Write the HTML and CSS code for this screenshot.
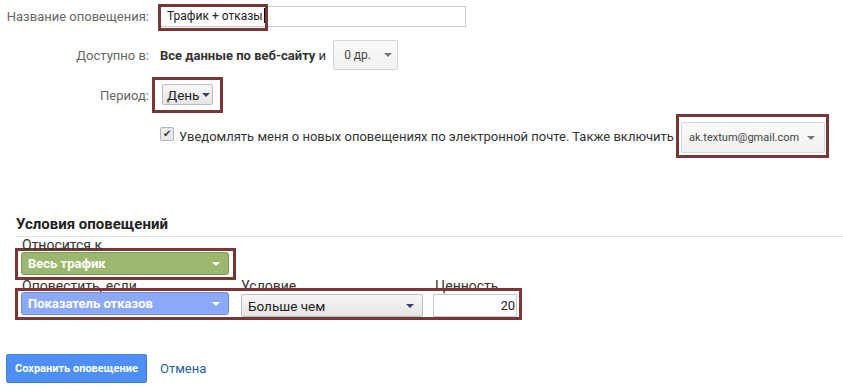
FILE: index.html
```html
<!DOCTYPE html>
<html lang="ru">
<head>
    <meta charset="UTF-8">
    <title>Оповещение</title>
    <link rel="stylesheet" href="styles.css">
</head>
<body>
    <div class="page">

        <!-- Общие настройки -->
        <div class="row row-name">
            <div class="label">Название оповещения:</div>
            <div class="field">
                <div class="text-input name-input">Трафик + отказы<span class="caret"></span></div>
                <div class="mark mark-name"></div>
            </div>
        </div>

        <div class="row row-avail">
            <div class="label">Доступно в:</div>
            <div class="field">
                <span><b>Все данные по веб-сайту</b> и</span>
                <button class="btn btn-small">0 др. <span class="arrow arrow-gray"></span></button>
            </div>
        </div>

        <div class="row row-period">
            <div class="label">Период:</div>
            <div class="mark mark-period">
                <button class="btn btn-day">День <span class="arrow arrow-navy"></span></button>
            </div>
        </div>

        <div class="row row-notify">
            <div class="label"></div>
            <div class="field notify">
                <span class="checkbox">&#10004;</span>
                <span class="notify-text">Уведомлять меня о новых оповещениях по электронной почте. Также включить</span>
                <div class="mark mark-email">
                    <button class="btn btn-email">ak.textum@gmail.com <span class="arrow arrow-gray"></span></button>
                </div>
            </div>
        </div>

        <!-- Условия -->
        <div class="conditions">
            <h3 class="section-title">Условия оповещений</h3>
            <div class="cond-label">Относится к</div>
            <div class="mark mark-scope">
                <div class="select select-green">Весь трафик <span class="arrow arrow-white"></span></div>
            </div>
            <div class="cond-labels">
                <span class="col-metric">Оповестить, если</span>
                <span class="col-cond">Условие</span>
                <span class="col-value">Ценность</span>
            </div>
            <div class="mark mark-rule">
                <div class="select select-blue">Показатель отказов <span class="arrow arrow-white"></span></div>
                <div class="select select-gray">Больше чем <span class="arrow arrow-navy"></span></div>
                <div class="text-input value-input">20</div>
            </div>
        </div>

        <div class="actions">
            <button class="btn-save">Сохранить оповещение</button>
            <a class="cancel" href="#">Отмена</a>
        </div>
    </div>
</body>
</html>
```

FILE: styles.css
```css
/* Общие стили */
body {
    margin: 0;
    background: #fff;
    font-family: Roboto, 'Liberation Sans', Arial, sans-serif;
    font-size: 13px;
    color: #333;
}

.page {
    width: 843px;
    height: 388px;
    overflow: hidden;
}

/* Рамки-выделения */
.mark {
    border: 3px solid #7a3636;
    box-sizing: border-box;
}

/* Строки формы */
.row {
    display: flex;
    align-items: center;
}

.label {
    width: 150px;
    flex: none;
    text-align: right;
    color: #666;
    font-size: 13px;
    padding-right: 1px;
    box-sizing: border-box;
}

.field {
    margin-left: 10px;
    position: relative;
    display: flex;
    align-items: center;
}

.row-name {
    height: 33px;
}

.row-avail {
    height: 36px;
    margin-top: 4px;
}

.row-period {
    height: 36px;
    margin-top: 4px;
}

.row-notify {
    height: 46px;
}

.text-input {
    border: 1px solid #c8c8c8;
    box-sizing: border-box;
    background: #fff;
    color: #222;
    font-size: 13px;
}

.name-input {
    width: 306px;
    height: 21px;
    line-height: 19px;
    padding-left: 6px;
    font-size: 12px;
}

.caret {
    display: inline-block;
    position: relative;
    z-index: 1;
    width: 1px;
    height: 15px;
    margin-left: 1px;
    background: #000;
    vertical-align: -3px;
}

.mark-name {
    position: absolute;
    left: -2px;
    top: -2px;
    width: 110px;
    height: 27px;
}

/* Кнопки */
.btn {
    font-family: inherit;
    border: 1px solid #d6d6d6;
    border-radius: 2px;
    background: linear-gradient(#fafafa, #f1f1f1);
    color: #444;
    padding: 0;
    display: flex;
    align-items: center;
    box-sizing: border-box;
}

.btn-small {
    width: 65px;
    height: 30px;
    margin-left: 7px;
    font-size: 12px;
    padding-left: 10px;
    gap: 13px;
}

.mark-period {
    margin-left: 2px;
    padding: 4px 7px 5px 7px;
}

.btn-day {
    width: 51px;
    height: 21px;
    font-size: 13.5px;
    color: #222;
    padding-left: 4px;
    gap: 3px;
    border-color: #bdbdbd;
    background: linear-gradient(#f7f7f7, #e6e6e6);
}

.notify {
    height: 46px;
}

.checkbox {
    width: 12px;
    height: 12px;
    border: 1px solid #b5b5b5;
    border-radius: 2px;
    background: #e9e9e9;
    color: #333;
    font-size: 10px;
    line-height: 12px;
    text-align: center;
    margin-top: -4px;
}

.notify-text {
    margin-left: 5px;
    color: #333;
    white-space: nowrap;
}

.mark-email {
    margin-left: 2px;
    width: 153px;
    height: 44px;
    padding: 5px 1px 2px 2px;
}

.btn-email {
    width: 144px;
    height: 31px;
    font-size: 11px;
    padding: 0 9px 0 7px;
    justify-content: space-between;
}

/* Стрелки */
.arrow {
    display: inline-block;
    width: 0;
    height: 0;
    border-left: 4px solid transparent;
    border-right: 4px solid transparent;
    border-top: 4px solid #777;
}

.arrow-navy {
    border-top-color: #2f3f6f;
}

.arrow-white {
    border-top-color: #fff;
}

/* Условия оповещений */
.conditions {
    margin-top: 56px;
    padding-left: 15px;
}

.section-title {
    margin: 0 0 0 1px;
    font-size: 15px;
    line-height: 18px;
    color: #222;
    padding-bottom: 3px;
    border-bottom: 1px solid #e2e2e2;
}

.cond-label,
.cond-labels {
    font-size: 14px;
    color: #333;
    line-height: 16px;
}

.cond-label {
    padding-left: 7px;
}

.mark-scope {
    width: 221px;
    height: 32px;
    margin-top: -5px;
    padding: 1px 4px 1px 3px;
}

.select {
    display: flex;
    align-items: center;
    justify-content: space-between;
    box-sizing: border-box;
    border-radius: 3px;
    font-size: 13px;
    font-weight: bold;
    color: #fff;
    padding: 0 6px 0 6px;
}

.select .arrow {
    margin-right: 2px;
}

.select-green {
    width: 208px;
    height: 23px;
    background: #9cb86e;
    border: 1px solid #7f9b56;
}

.cond-labels {
    display: flex;
    margin-top: -2px;
    position: relative;
    z-index: -1;
}

.col-metric {
    width: 219px;
    padding-left: 7px;
}

.col-cond {
    width: 194px;
}

.mark-rule {
    display: flex;
    align-items: flex-start;
    width: 507px;
    height: 32px;
    margin-top: -6px;
    padding: 1px 2px 0 3px;
}

.select-blue {
    width: 208px;
    height: 23px;
    background: #8ca8f8;
    border: 1px solid #6e8be0;
}

.select-gray {
    width: 182px;
    height: 23px;
    margin-top: 2px;
    margin-left: 12px;
    background: linear-gradient(#f7f7f7, #e4e4e4);
    border: 1px solid #bdbdbd;
    border-radius: 2px;
    color: #222;
    font-weight: normal;
    font-size: 13.5px;
    padding-left: 6px;
}

.value-input {
    width: 84px;
    height: 23px;
    margin-top: 2px;
    margin-left: 10px;
    text-align: right;
    font-size: 13px;
    line-height: 21px;
    padding-right: 1px;
}

/* Кнопки внизу */
.actions {
    display: flex;
    align-items: center;
    margin-top: 34px;
    padding-left: 6px;
    gap: 13px;
}

.btn-save {
    width: 141px;
    height: 29px;
    background: #4d8ff5;
    border: 1px solid #3f80e8;
    border-radius: 2px;
    color: #fff;
    font-family: inherit;
    font-size: 11px;
    font-weight: bold;
    padding: 0;
}

.cancel {
    color: #1f5fa8;
    font-size: 13px;
    text-decoration: none;
}
```
